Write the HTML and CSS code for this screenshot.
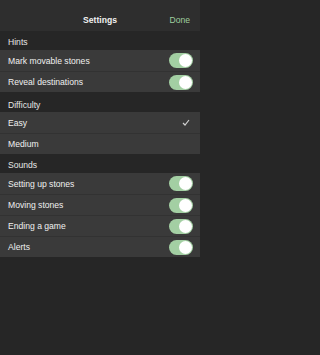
FILE: index.html
```html
<!DOCTYPE html>
<html>
<head>
<meta charset="utf-8">
<link rel="stylesheet" href="styles.css">
</head>
<body>
<div class="nav">
  <span class="nav-title">Settings</span>
  <span class="nav-done">Done</span>
</div>
<div class="section-head h19">Hints</div>
<div class="group">
  <div class="row"><span>Mark movable stones</span><span class="toggle"><span class="knob"></span></span></div>
  <div class="row"><span>Reveal destinations</span><span class="toggle"><span class="knob"></span></span></div>
</div>
<div class="section-head h20">Difficulty</div>
<div class="group">
  <div class="row"><span>Easy</span><svg class="check" width="8" height="7" viewBox="0 0 8 7"><polyline points="1,4 3,6 7,1" fill="none" stroke="#d0d0d0" stroke-width="1.2"/></svg></div>
  <div class="row"><span>Medium</span></div>
</div>
<div class="section-head h19">Sounds</div>
<div class="group">
  <div class="row"><span>Setting up stones</span><span class="toggle"><span class="knob"></span></span></div>
  <div class="row"><span>Moving stones</span><span class="toggle"><span class="knob"></span></span></div>
  <div class="row"><span>Ending a game</span><span class="toggle"><span class="knob"></span></span></div>
  <div class="row"><span>Alerts</span><span class="toggle"><span class="knob"></span></span></div>
</div>
</body>
</html>
```
FILE: styles.css
```css
html, body {
  margin: 0;
  padding: 0;
  background: #262626;
  font-family: "Liberation Sans", Arial, sans-serif;
  color: #eeeeee;
  width: 200px;
  height: 355px;
  overflow: hidden;
}
.nav {
  height: 31px;
  background: #2e2e2e;
  display: flex;
  align-items: center;
  justify-content: center;
  position: relative;
  font-size: 8.6px;
}
.nav-title {
  font-weight: bold;
  color: #f2f2f2;
  padding-top: 8px;
}
.nav-done {
  position: absolute;
  right: 10px;
  top: 15px;
  color: #9fcf9f;
}
.section-head {
  box-sizing: border-box;
  font-size: 8.6px;
  color: #e6e6e6;
  padding-left: 8px;
  display: flex;
  align-items: flex-end;
  padding-bottom: 3px;
  background: #262626;
}
.h19 { height: 19px; padding-bottom: 3px; }
.h20 { height: 20px; padding-bottom: 2px; }
.group {
  background: #3a3a3a;
}
.row {
  box-sizing: border-box;
  height: 21px;
  display: flex;
  align-items: center;
  justify-content: space-between;
  padding: 0 7px 0 8px;
  font-size: 8.6px;
  color: #f0f0f0;
  border-top: 1px solid #323232;
}
.row:first-child {
  border-top: none;
}
.toggle {
  width: 24px;
  height: 15px;
  border-radius: 8px;
  background: #a3cfa3;
  position: relative;
  display: block;
}
.knob {
  position: absolute;
  right: 1px;
  top: 1px;
  width: 13px;
  height: 13px;
  border-radius: 50%;
  background: #ffffff;
}
.check {
  margin-right: 3px;
}
```
